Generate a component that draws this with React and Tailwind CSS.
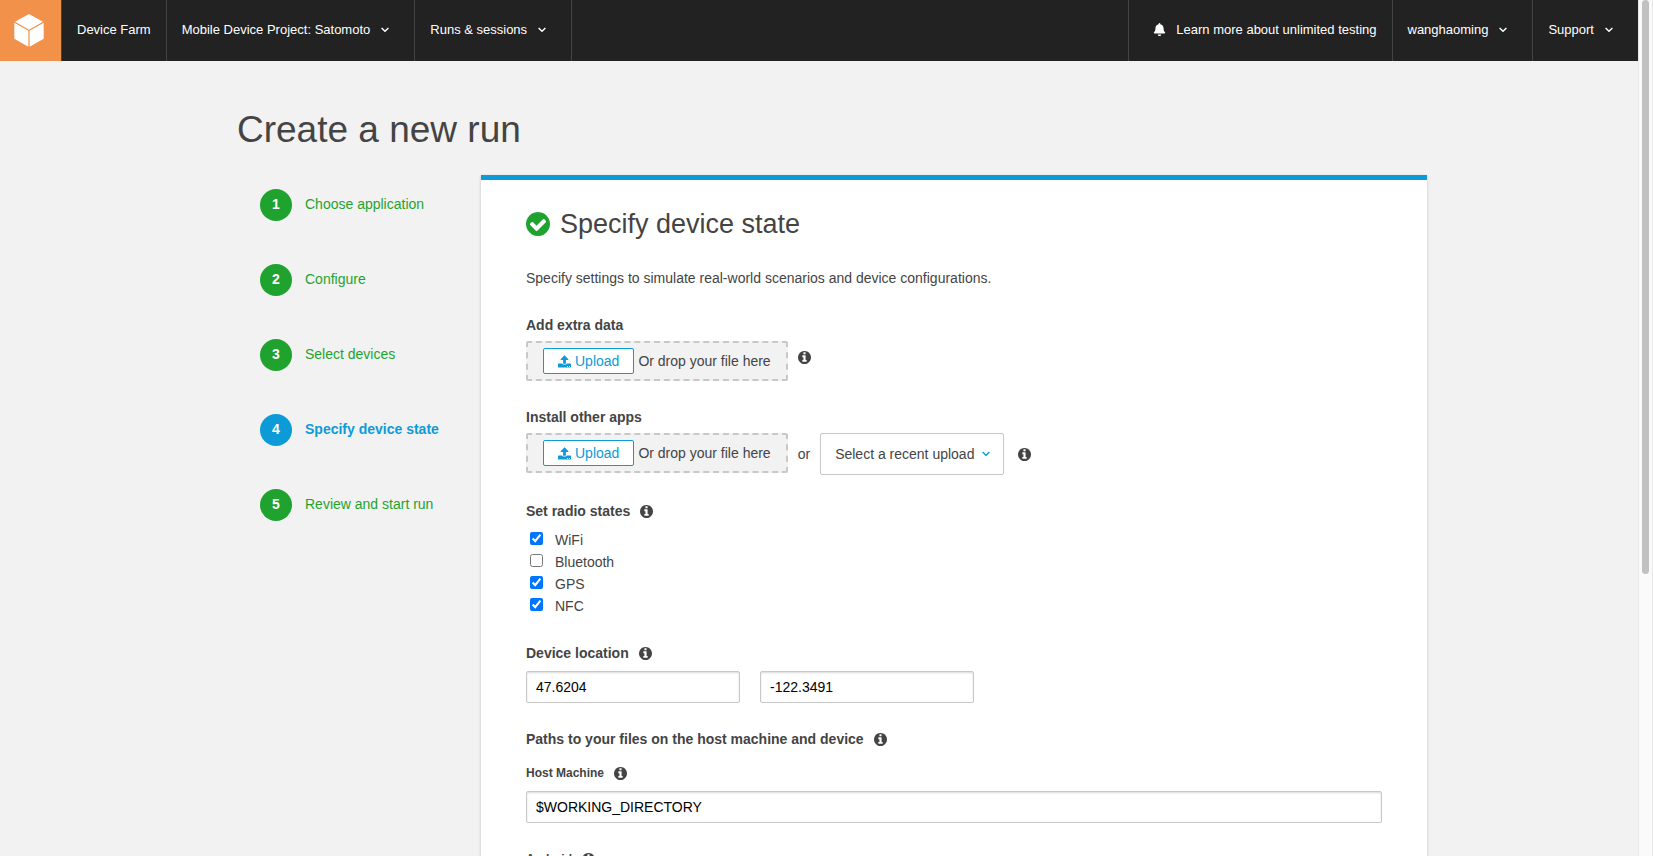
import { FaBell } from "react-icons/fa";

const steps = [
  { n: 1, label: "Choose application" },
  { n: 2, label: "Configure" },
  { n: 3, label: "Select devices" },
  { n: 4, label: "Specify device state", current: true },
  { n: 5, label: "Review and start run" },
];

const radios = [
  { id: "wifi", label: "WiFi", on: true },
  { id: "bluetooth", label: "Bluetooth", on: false },
  { id: "gps", label: "GPS", on: true },
  { id: "nfc", label: "NFC", on: true },
];

const inputClass =
  "h-8 rounded-xs border border-[#c8c8c8] bg-white px-[9px] text-sm text-black shadow-[inset_0_1px_2px_rgba(0,0,0,0.15)]";

function Logo() {
  return (
    <svg viewBox="0 0 30 33" className="h-[33px] w-[30px]" fill="#fff" aria-hidden="true">
      <path d="M15 0 29 7.800 15 15.800 1 7.800Z" />
      <path d="M0.300 8.800 14.400 16.800V32.700L0.300 24.700Z" />
      <path d="M29.700 8.800 15.600 16.800V32.700L29.700 24.700Z" />
    </svg>
  );
}

function Angle({ className = "" }) {
  return (
    <svg
      viewBox="0 0 8 6"
      className={`h-1.5 w-2 shrink-0 ${className}`}
      fill="none"
      stroke="currentColor"
      strokeWidth="1.400"
      aria-hidden="true"
    >
      <path d="M0.600 0.900 4 4.300 7.400 0.900" />
    </svg>
  );
}

function InfoIcon() {
  return (
    <svg viewBox="0 128 1536 1536" className="size-[13px]" fill="currentColor" aria-hidden="true">
      <path d="M1024 1376v-160q0-14-9-23t-23-9h-96v-512q0-14-9-23t-23-9h-320q-14 0-23 9t-9 23v160q0 14 9 23t23 9h96v320h-96q-14 0-23 9t-9 23v160q0 14 9 23t23 9h448q14 0 23-9t9-23zm-128-896v-160q0-14-9-23t-23-9h-192q-14 0-23 9t-9 23v160q0 14 9 23t23 9h192q14 0 23-9t9-23zm640 416q0 209-103 385.500t-279.500 279.500-385.500 103-385.500-103-279.500-279.500-103-385.500 103-385.500 279.500-279.500 385.500-103 385.500 103 279.500 279.500 103 385.500z" />
    </svg>
  );
}

function CheckIcon() {
  return (
    <svg viewBox="0 128 1536 1536" className="size-6 text-[#1fa32e]" fill="currentColor" aria-hidden="true">
      <path d="M1284 734q0-28-18-46l-91-90q-19-19-45-19t-45 19l-408 407-226-226q-19-19-45-19t-45 19l-91 90q-18 18-18 46 0 27 18 45l362 362q19 19 45 19 27 0 46-19l543-543q18-18 18-45zm252 162q0 209-103 385.500t-279.500 279.500-385.500 103-385.500-103-279.500-279.500-103-385.500 103-385.500 279.500-279.500 385.500-103 385.500 103 279.500 279.500 103 385.500z" />
    </svg>
  );
}

function UploadIcon() {
  return (
    <svg viewBox="0 0 13 13" className="size-[13px]" fill="currentColor" aria-hidden="true">
      <path d="M6.500 0.300 10.400 4.300Q10.600 4.900 10 4.900H7.900V8.200Q7.900 8.700 7.400 8.700H5.600Q5.100 8.700 5.100 8.200V4.900H3Q2.400 4.900 2.600 4.300Z" />
      <path
        fillRule="evenodd"
        d="M0.600 8.600H4.200Q4.500 9.600 5.600 9.600H7.400Q8.500 9.600 8.800 8.600H12.400Q13 8.600 13 9.200V12Q13 12.600 12.400 12.600H0.600Q0 12.600 0 12V9.200Q0 8.600 0.600 8.600ZM9 11V11.900H9.900V11ZM11 11V11.900H11.900V11Z"
      />
    </svg>
  );
}

function Info({ className = "" }) {
  return (
    <button type="button" aria-label="More information" className={`shrink-0 ${className}`}>
      <InfoIcon />
    </button>
  );
}

function NavMenu({ children, className }) {
  return (
    <button type="button" className={`flex items-center gap-[11px] pr-[25px] pb-0.5 ${className}`}>
      {children}
      <Angle />
    </button>
  );
}

function DropZone() {
  return (
    <div className="flex h-10 items-center gap-1 self-start rounded-xs border-2 border-dashed border-[#c8c8c8] bg-[#f2f2f2] px-[15px]">
      <button
        type="button"
        className="flex h-[26px] items-center gap-1 rounded-xs border border-[#0d9bd7] bg-white px-[14px] text-[#0d9bd7]"
      >
        <UploadIcon />
        Upload
      </button>
      <span>Or drop your file here</span>
    </div>
  );
}

function Heading({ children, info, className = "" }) {
  return (
    <h3 className={`flex items-center gap-2.5 font-bold ${className}`}>
      {children}
      {info && <Info />}
    </h3>
  );
}

export default function App() {
  return (
    <div className="flex h-screen overflow-hidden bg-[#f2f2f2] font-['Liberation_Sans',Arial,sans-serif] text-sm leading-5 text-[#444]">
      <div className="min-w-0 flex-1 overflow-y-auto [scrollbar-width:none]">
        <header className="flex h-[61px] items-stretch bg-[#222] text-[13px] text-white">
          <a href="#home" aria-label="Home" className="flex w-[61px] items-center justify-center bg-[#f2914a] pr-[3px]">
            <Logo />
          </a>
          <nav className="flex flex-1 items-stretch">
            <a href="#device-farm" className="flex items-center border-x border-[#444] px-[15px] pb-0.5">
              Device Farm
            </a>
            <NavMenu className="border-r border-[#444] pl-[15px]">Mobile Device Project: Satomoto</NavMenu>
            <NavMenu className="border-r border-[#444] pl-[15px]">Runs &amp; sessions</NavMenu>
            <a href="#unlimited" className="ml-auto flex items-center gap-2.5 border-l border-[#444] pr-[15px] pb-0.5 pl-6">
              <FaBell className="size-[13px]" />
              Learn more about unlimited testing
            </a>
            <NavMenu className="border-l border-[#444] pl-[15px]">wanghaoming</NavMenu>
            <NavMenu className="border-l border-[#444] pl-[15px]">Support</NavMenu>
          </nav>
        </header>

        <div className="mx-auto max-w-[1216px] pt-12">
          <h1 className="pl-[26px] text-[37px] leading-[42px]">Create a new run</h1>
          <div className="mt-6 flex items-start">
            <ol className="flex w-[270px] shrink-0 flex-col gap-[43px] pt-[14px] pl-[49px]">
              {steps.map((s) => (
                <li key={s.n}>
                  <a
                    href={`#step-${s.n}`}
                    className={`flex items-center gap-[13px] ${s.current ? "font-bold text-[#0d9bd7]" : "text-[#1fa32e]"}`}
                  >
                    <span
                      className={`flex size-8 items-center justify-center rounded-full pb-0.5 font-bold text-white ${s.current ? "bg-[#0d9bd7]" : "bg-[#1fa32e]"}`}
                    >
                      {s.n}
                    </span>
                    <span className="pb-0.5">{s.label}</span>
                  </a>
                </li>
              ))}
            </ol>

            <main className="min-w-0 flex-1 border-t-5 border-[#0d9bd7] bg-white px-[45px] pt-7 pb-10 shadow-[0_1px_3px_rgba(0,0,0,0.2)]">
              <h2 className="flex items-center gap-2.5 text-[27px] leading-8">
                <CheckIcon />
                Specify device state
              </h2>
              <p className="mt-7">Specify settings to simulate real-world scenarios and device configurations.</p>

              <Heading className="mt-[27px]">Add extra data</Heading>
              <div className="mt-1.5 flex items-start gap-2.5">
                <DropZone />
                <Info className="mt-2.5" />
              </div>

              <Heading className="mt-[26px]">Install other apps</Heading>
              <div className="mt-1.5 flex items-center gap-2.5">
                <DropZone />
                <label htmlFor="recent">or</label>
                <div className="relative">
                  <select
                    id="recent"
                    className="h-[42px] appearance-none rounded-xs border border-[#c8c8c8] bg-white pr-7 pl-[14px]"
                  >
                    <option>Select a recent upload</option>
                  </select>
                  <Angle className="pointer-events-none absolute top-[18px] right-[14px] text-[#0d9bd7]" />
                </div>
                <Info className="ml-1" />
              </div>

              <Heading info className="mt-[26px]">Set radio states</Heading>
              <ul className="mt-2">
                {radios.map((r) => (
                  <li key={r.id} className="flex h-[22px] items-center gap-3 pl-1">
                    <input id={r.id} type="checkbox" defaultChecked={r.on} className="mb-1 size-[13px] accent-[#0075ff]" />
                    <label htmlFor={r.id}>{r.label}</label>
                  </li>
                ))}
              </ul>

              <Heading info className="mt-[26px]">Device location</Heading>
              <div className="mt-2 flex gap-5">
                <input aria-label="Latitude" defaultValue="47.6204" className={`w-[214px] ${inputClass}`} />
                <input aria-label="Longitude" defaultValue="-122.3491" className={`w-[214px] ${inputClass}`} />
              </div>

              <Heading info className="mt-[26px]">Paths to your files on the host machine and device</Heading>

              <div className="mt-[14px] flex items-center gap-2.5 text-xs leading-5 font-bold">
                <label htmlFor="host">Host Machine</label>
                <Info />
              </div>
              <input id="host" defaultValue="$WORKING_DIRECTORY" className={`mt-2 w-full ${inputClass}`} />

              <div className="mt-[26px] flex items-center gap-2.5 text-xs leading-5 font-bold">
                <label htmlFor="android">Android</label>
                <Info />
              </div>
              <input id="android" defaultValue="$WORKING_DIRECTORY" className={`mt-2 w-full ${inputClass}`} />
            </main>
          </div>
        </div>
      </div>

      <div aria-hidden="true" className="w-[15px] shrink-0 border-x border-[#e8e8e8] bg-[#fafafa] px-[3px]">
        <div className="h-[67%] rounded-full bg-[#c1c1c1]" />
      </div>
    </div>
  );
}
